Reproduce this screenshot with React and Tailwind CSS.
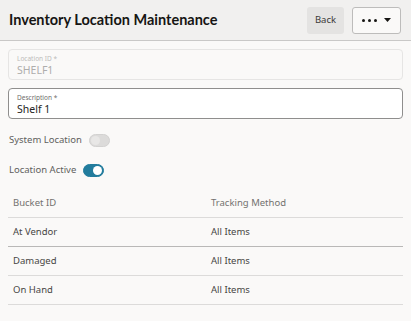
import { useState } from "react";

const Toggle = ({ on, disabled, onClick }) => (
    <button
        type="button"
        onClick={onClick}
        className={`relative w-[21px] h-[13px] rounded-full border ${on ? "bg-[#227c9d] border-[#227c9d]" : "bg-[#dcdbda] border-[#d3d2d1]"} ${disabled ? "cursor-default" : ""}`}
    >
        <span
            className={`absolute top-[1px] w-[9px] h-[9px] rounded-full ${on ? "right-[1px] bg-white" : "left-[1px] bg-[#e8e7e6]"}`}
        />
    </button>
);

const rows = [
    { bucket: "At Vendor", method: "All Items", dark: true },
    { bucket: "Damaged", method: "All Items" },
    { bucket: "On Hand", method: "All Items" },
];

export default function App() {
    const [active, setActive] = useState(true);
    const [description, setDescription] = useState("Shelf 1");

    return (
        <div className="bg-[#faf9f8] min-h-screen text-[#161513] font-['Noto_Sans',sans-serif]">
            {/* Header */}
            <div className="h-[41px] bg-[#f1f0ef] border-b border-[#c9c8c7] flex items-center justify-between pl-[9px] pr-[10px]">
                <h1 className="font-['Lato',sans-serif] text-[14.5px] font-bold">Inventory Location Maintenance</h1>
                <div className="flex items-center gap-[8px]">
                    <button className="h-[27px] w-[37px] rounded-[3px] bg-[#e4e3e2] text-[9.5px] text-[#3b3a38]">Back</button>
                    <button className="h-[27px] w-[49px] rounded-[3px] border border-[#bdbcbb] bg-[#faf9f8] flex items-center justify-center gap-[7px]">
                        <span className="flex gap-[3px]">
                            <span className="w-[3px] h-[3px] rounded-full bg-[#161513]" />
                            <span className="w-[3px] h-[3px] rounded-full bg-[#161513]" />
                            <span className="w-[3px] h-[3px] rounded-full bg-[#161513]" />
                        </span>
                        <svg width="7" height="4" viewBox="0 0 7 4"><path d="M0 0h7L3.5 4z" fill="#161513" /></svg>
                    </button>
                </div>
            </div>

            <div className="px-[8px] pt-[8px] flex flex-col">
                {/* Location ID (read only) */}
                <div className="h-[31px] rounded-[4px] border border-[#e6e5e4] px-[8px] pt-[4px]">
                    <div className="text-[6.5px] leading-[9px] text-[#bcbbba]">Location ID *</div>
                    <div className="text-[10.5px] leading-[14px] text-[#aeadac]">SHELF1</div>
                </div>

                {/* Description */}
                <label className="mt-[8px] h-[31px] rounded-[4px] border border-[#8f8e8d] bg-white px-[8px] pt-[4px] block">
                    <div className="text-[6.5px] leading-[9px] text-[#6f6e6c]">Description *</div>
                    <input
                        value={description}
                        onChange={(e) => setDescription(e.target.value)}
                        className="block w-full h-[14px] text-[10.5px] leading-[14px] text-[#262523] outline-none bg-transparent p-0"
                    />
                </label>

                {/* Switches */}
                <div className="mt-[14px] flex items-center gap-[7px] pl-[1px] h-[14px]">
                    <span className="text-[9.5px] text-[#605f5d]">System Location</span>
                    <Toggle on={false} disabled />
                </div>
                <div className="mt-[16px] flex items-center gap-[7px] pl-[1px] h-[14px]">
                    <span className="text-[9.5px] text-[#605f5d]">Location Active</span>
                    <Toggle on={active} onClick={() => setActive(!active)} />
                </div>

                {/* Buckets table */}
                <div className="mt-[13px]">
                    <div className="grid grid-cols-[198px_1fr] h-[28px] items-center px-[5px] border-b border-[#dcdbda] text-[9.5px] text-[#73726f]">
                        <span>Bucket ID</span>
                        <span>Tracking Method</span>
                    </div>
                    {rows.map((r) => (
                        <div
                            key={r.bucket}
                            className={`grid grid-cols-[198px_1fr] h-[29px] items-center px-[5px] border-b ${r.dark ? "border-[#b9b8b7]" : "border-[#dcdbda]"} text-[9.5px] text-[#474644]`}
                        >
                            <span>{r.bucket}</span>
                            <span>{r.method}</span>
                        </div>
                    ))}
                </div>
            </div>
        </div>
    );
}
